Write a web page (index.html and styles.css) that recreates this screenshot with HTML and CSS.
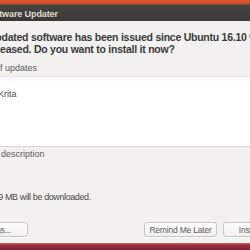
FILE: index.html
```html
<!DOCTYPE html>
<html lang="en">
<head>
  <meta charset="UTF-8" />
  <title>Software Updater</title>
  <link rel="stylesheet" href="styles.css">
</head>
<body>
  <div class="desktop-top"></div>

  <div class="window">
    <div class="titlebar">
      <span class="title">Software Updater</span>
    </div>

    <div class="content">
      <p class="message">Updated software has been issued since Ubuntu 16.10 was<br>released. Do you want to install it now?</p>

      <div class="expander">Details of updates</div>

      <div class="update-list">
        <div class="update-row">Krita</div>
      </div>

      <div class="expander tech">Technical description</div>

      <p class="download">12.9 MB will be downloaded.</p>

      <div class="actions">
        <button class="btn settings">Settings...</button>
        <div class="spacer"></div>
        <button class="btn remind">Remind Me Later</button>
        <button class="btn install">Install Now</button>
      </div>
    </div>
  </div>

  <div class="desktop-bottom"></div>
</body>
</html>
```

FILE: styles.css
```css
* {
  box-sizing: border-box;
  margin: 0;
  padding: 0;
}

body {
  width: 250px;
  height: 250px;
  overflow: hidden;
  background-color: #f2f1f0;
  font-family: "Liberation Sans", Arial, sans-serif;
  color: #3c3c3c;
}

.desktop-top {
  height: 5px;
  background: linear-gradient(#e4592f, #c64b2b 70%, #6a4036);
}

.window {
  height: 238px;
  overflow: hidden;
}

.titlebar {
  height: 16px;
  background: linear-gradient(#45443f, #3a3935);
  display: flex;
  align-items: center;
  padding-top: 1px;
}

.title {
  margin-left: -15px;
  color: #dfdbd2;
  font-size: 9px;
  font-weight: bold;
  letter-spacing: -0.1px;
  white-space: nowrap;
}

.content {
  margin-left: -12px;
  width: 310px;
  display: flex;
  flex-direction: column;
}

.message {
  font-size: 10.5px;
  font-weight: bold;
  letter-spacing: -0.25px;
  line-height: 12px;
  color: #3a3a3a;
  white-space: nowrap;
  padding-top: 10px;
}

.expander {
  margin-left: -23px;
  font-size: 9px;
  line-height: 11px;
  color: #5c5c5a;
  height: 21px;
  padding-top: 8px;
  white-space: nowrap;
}

.update-list {
  background-color: #fff;
  border-top: 1px solid #e6e5e3;
  border-bottom: 1px solid #d6d5d2;
  height: 71px;
  padding: 12px 0 0 10px;
  box-shadow: inset 0 3px 3px rgba(0,0,0,0.03);
}

.update-row {
  font-size: 9px;
  line-height: 11px;
  color: #4a4a4a;
}

.tech {
  margin-left: -27px;
  padding-top: 2px;
  height: 45px;
}

.download {
  margin-left: -1px;
  font-size: 9px;
  letter-spacing: -0.4px;
  line-height: 11px;
  color: #4a4a4a;
  white-space: nowrap;
}

.actions {
  display: flex;
  gap: 6px;
  margin-top: 19px;
  padding-right: 4px;
}

.spacer {
  flex: 1;
}

.btn {
  height: 15px;
  font-family: inherit;
  font-size: 8.5px;
  letter-spacing: -0.2px;
  color: #5e5e5e;
  background: linear-gradient(#fcfcfb, #f1f0ee);
  border: 1px solid #c8c7c4;
  border-radius: 3px;
  white-space: nowrap;
  box-shadow: 0 1px 0 rgba(255,255,255,0.8);
}

.settings {
  margin-left: -28px;
  width: 68px;
  text-align: right;
  padding-right: 16px;
}

.remind {
  width: 73px;
}

.install {
  width: 71px;
}

.desktop-bottom {
  height: 7px;
  background: linear-gradient(#d27170, #9a2f40 30%, #7c2033);
}
```
